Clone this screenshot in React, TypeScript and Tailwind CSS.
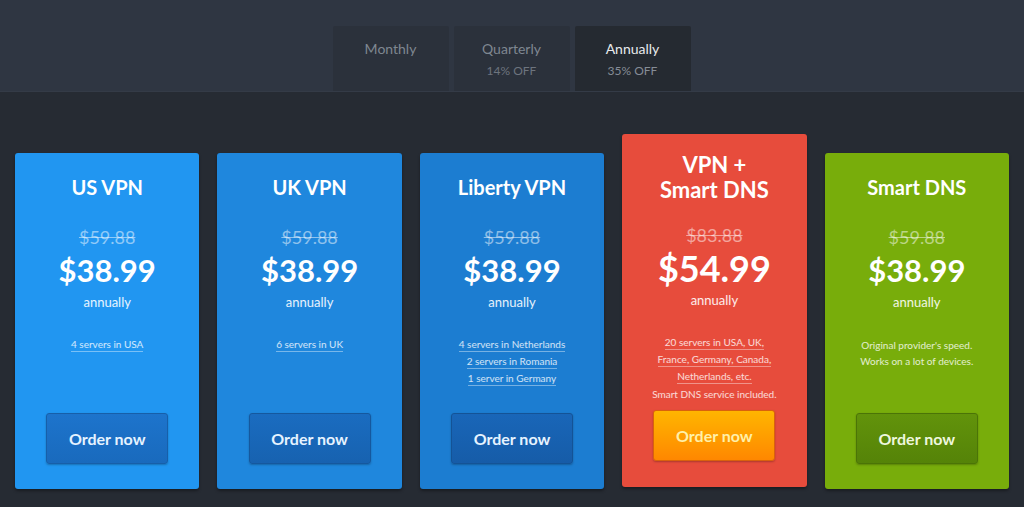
import React from "react";

type Plan = {
  title: string[];
  oldPrice: string;
  price: string;
  notes: { text: string; link: boolean }[];
  card: string;
  button: string;
  btnText: string;
  featured?: boolean;
};

const plans: Plan[] = [
  {
    title: ["US VPN"],
    oldPrice: "$59.88",
    price: "$38.99",
    notes: [{ text: "4 servers in USA", link: true }],
    card: "bg-[#2196f1]",
    button: "bg-gradient-to-b from-[#1d74cc] to-[#196abd] border-[#175fa9]",
    btnText: "text-[#e6f3ff]",
  },
  {
    title: ["UK VPN"],
    oldPrice: "$59.88",
    price: "$38.99",
    notes: [{ text: "6 servers in UK", link: true }],
    card: "bg-[#1f87dd]",
    button: "bg-gradient-to-b from-[#1a6cc0] to-[#1762b0] border-[#15589e]",
    btnText: "text-[#e6f3ff]",
  },
  {
    title: ["Liberty VPN"],
    oldPrice: "$59.88",
    price: "$38.99",
    notes: [
      { text: "4 servers in Netherlands", link: true },
      { text: "2 servers in Romania", link: true },
      { text: "1 server in Germany", link: true },
    ],
    card: "bg-[#1c7dd1]",
    button: "bg-gradient-to-b from-[#1966b8] to-[#165ca8] border-[#145396]",
    btnText: "text-[#e6f3ff]",
  },
  {
    title: ["VPN +", "Smart DNS"],
    oldPrice: "$83.88",
    price: "$54.99",
    notes: [
      { text: "20 servers in USA, UK,", link: true },
      { text: "France, Germany, Canada,", link: true },
      { text: "Netherlands, etc.", link: true },
      { text: "Smart DNS service included.", link: false },
    ],
    card: "bg-[#e74c3c]",
    button: "bg-gradient-to-b from-[#ffb500] to-[#ff8700] border-[#d9620c]",
    btnText: "text-[#fff0a8]",
    featured: true,
  },
  {
    title: ["Smart DNS"],
    oldPrice: "$59.88",
    price: "$38.99",
    notes: [
      { text: "Original provider's speed.", link: false },
      { text: "Works on a lot of devices.", link: false },
    ],
    card: "bg-[#78ad0b]",
    button: "bg-gradient-to-b from-[#62930b] to-[#558308] border-[#4b7407]",
    btnText: "text-[#eef7dd]",
  },
];

const tabs = [
  { label: "Monthly", off: "", active: false },
  { label: "Quarterly", off: "14% OFF", active: false },
  { label: "Annually", off: "35% OFF", active: true },
];

function Card({ plan }: { plan: Plan }) {
  return (
    <div
      className={`${plan.card} flex flex-col items-center rounded-[3px] text-white shadow-[0_2px_3px_rgba(0,0,0,0.35)] ${
        plan.featured ? "mt-[43px] h-[353px]" : "mt-[62px] h-[336px]"
      }`}
    >
      {/* Title */}
      <div
        className={`flex flex-col items-center justify-center font-bold ${
          plan.featured ? "h-[85px] text-[22px] leading-[25px]" : "h-[68px] text-[20px] leading-[24px]"
        }`}
      >
        {plan.title.map((t) => (
          <span key={t}>{t}</span>
        ))}
      </div>

      <div className="mt-[6px] h-[20px] text-[18px] leading-[20px] text-white/50 line-through">
        {plan.oldPrice}
      </div>
      <div
        className={`mt-[5px] h-[36px] font-bold leading-[36px] ${
          plan.featured ? "text-[36px]" : "text-[31px]"
        }`}
      >
        {plan.price}
      </div>
      <div className="mt-[6px] text-[13px] leading-[16px] text-white/90">annually</div>

      <div className="mt-[27px] flex flex-col items-center text-[10px] leading-[16px] text-white/80">
        {plan.notes.map((n) => (
          <span
            key={n.text}
            className={n.link ? "border-b border-white/40 leading-[14px] mb-[2px]" : ""}
          >
            {n.text}
          </span>
        ))}
      </div>

      <button
        className={`${plan.button} ${plan.btnText} mt-auto w-[122px] h-[51px] rounded-[3px] border text-[16px] font-bold shadow-[0_1px_2px_rgba(0,0,0,0.25)] ${
          plan.featured ? "mb-[26px]" : "mb-[25px]"
        }`}
      >
        Order now
      </button>
    </div>
  );
}

export default function App() {
  return (
    <div className="w-[1024px] h-[507px] overflow-hidden bg-[#262b33] font-['Lato','Noto_Sans',sans-serif]">
      {/* Billing period tabs */}
      <div className="h-[92px] bg-[#2f3642] border-b border-[#343b47] flex justify-center items-end">
        <div className="flex gap-[5px] ml-[-1px]">
          {tabs.map((t) => (
            <div
              key={t.label}
              className={`w-[116px] h-[65px] pt-[12px] rounded-t-[2px] flex flex-col items-center text-[14px] leading-[22px] ${
                t.active ? "bg-[#252a31]" : "bg-[#2b313b]"
              }`}
            >
              <span className={t.active ? "text-[#e8eaed]" : "text-[#7f8791]"}>{t.label}</span>
              {t.off && (
                <span className={`text-[12px] ${t.active ? "text-[#858c96]" : "text-[#6d747e]"}`}>
                  {t.off}
                </span>
              )}
            </div>
          ))}
        </div>
      </div>

      {/* Plans */}
      <div className="grid grid-cols-5 gap-[18px] px-[15px] items-start mt-[-1px]">
        {plans.map((p) => (
          <Card key={p.title.join(" ")} plan={p} />
        ))}
      </div>
    </div>
  );
}
